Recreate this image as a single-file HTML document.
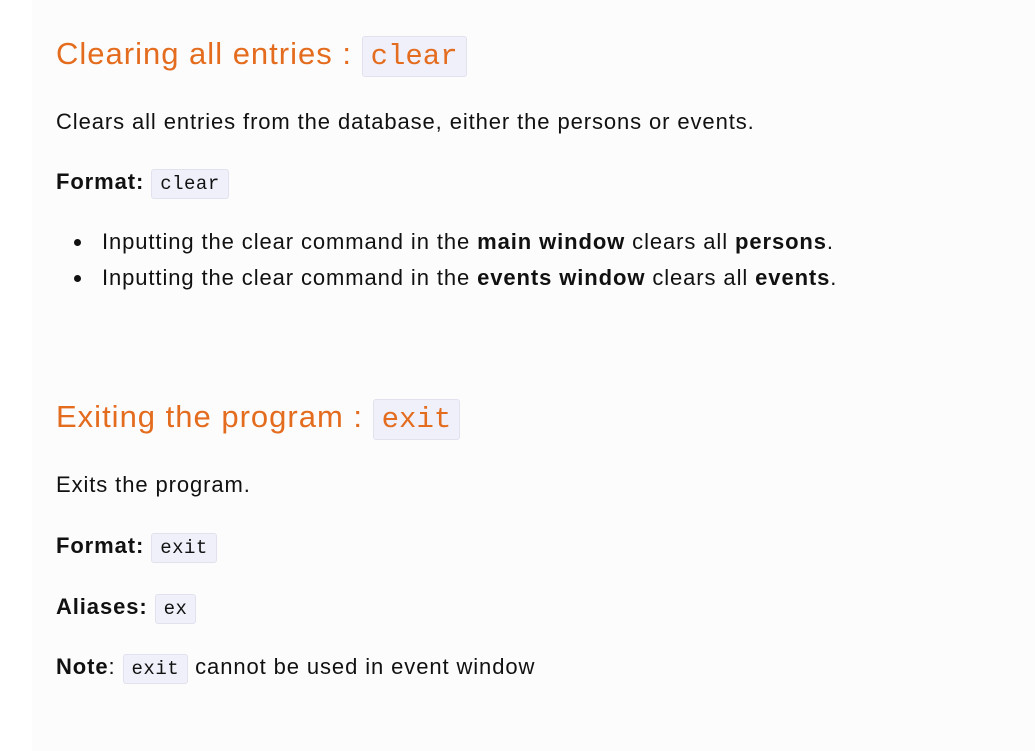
<!DOCTYPE html>
<html><head><style>
body{margin:0;width:1035px;height:751px;background:#fff;overflow:hidden;font-family:"Liberation Sans",sans-serif;color:#111;}
#p{position:absolute;left:32px;top:0;width:1003px;height:751px;background:#fcfcfc;}
.t{position:absolute;left:56px;white-space:nowrap;font-size:22px;letter-spacing:0.9px;line-height:26px;}
h2{position:absolute;left:56px;margin:0;font-weight:normal;color:#e46c1e;font-size:31px;letter-spacing:1px;line-height:40px;white-space:nowrap;}
code{font-family:"Liberation Mono",monospace;background:#f0f0fa;border:1px solid #e2e2ef;border-radius:3px;padding:3px 8px;font-size:19px;letter-spacing:0.5px;}
h2 code{font-size:29px;padding:3px 8px;color:#e46c1e;letter-spacing:0;}
.dot{position:absolute;left:74px;width:7px;height:7px;border-radius:50%;background:#111;}
</style></head><body>
<div id="p"></div>
<h2 style="top:34px">Clearing all entries : <code>clear</code></h2>
<div class="t" style="top:109px">Clears all entries from the database, either the persons or events.</div>
<div class="t" style="top:169px"><b>Format:</b> <code>clear</code></div>
<div class="dot" style="top:239px"></div>
<div class="t" style="left:102px;top:229px">Inputting the clear command in the <b>main window</b> clears all <b>persons</b>.</div>
<div class="dot" style="top:275px"></div>
<div class="t" style="left:102px;top:265px">Inputting the clear command in the <b>events window</b> clears all <b>events</b>.</div>
<h2 style="top:397px">Exiting the program : <code>exit</code></h2>
<div class="t" style="top:472px">Exits the program.</div>
<div class="t" style="top:533px"><b>Format:</b> <code>exit</code></div>
<div class="t" style="top:594px"><b>Aliases:</b> <code>ex</code></div>
<div class="t" style="top:654px"><b>Note</b>: <code>exit</code> cannot be used in event window</div>
</body></html>
